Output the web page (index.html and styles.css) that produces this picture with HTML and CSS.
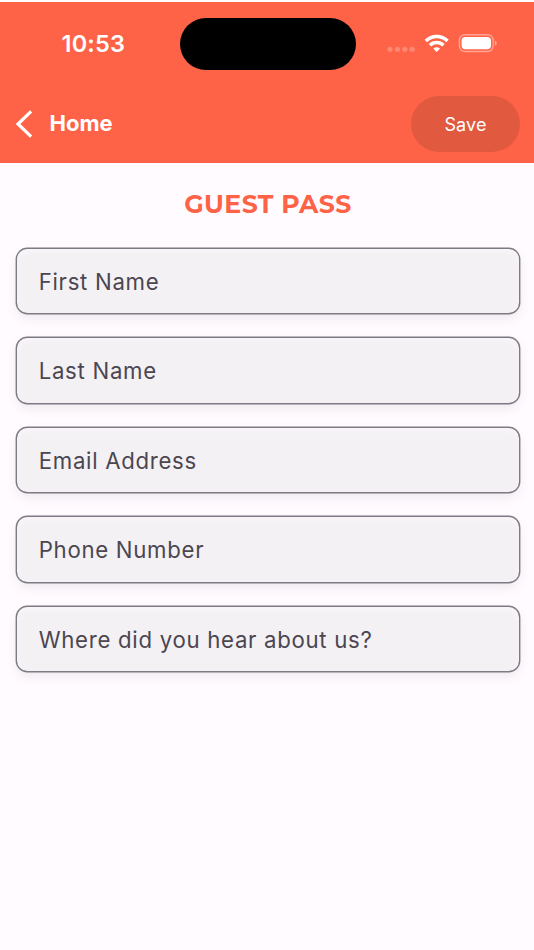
FILE: index.html
```html
<!DOCTYPE html>
<html lang="en">
<head>
<meta charset="utf-8">
<title>Guest Pass</title>
<link rel="stylesheet" href="styles.css">
</head>
<body>
<header class="header">
  <div class="status">
    <span class="time">10:53</span>
    <span class="island"></span>
    <svg class="indicators" width="112" height="24" viewBox="0 0 112 24">
      <g fill="#fff" fill-opacity=".24"><circle cx="3" cy="17.3" r="2.6"/><circle cx="10.4" cy="17.3" r="2.6"/><circle cx="17.8" cy="17.3" r="2.6"/><circle cx="25.2" cy="17.3" r="2.6"/></g>
      <g fill="none" stroke="#fff" stroke-width="3.5"><path d="M38.9 8.9a15.3 15.3 0 0 1 21.6 0"/><path d="M43 13.2a9.5 9.5 0 0 1 13.4 0"/></g>
      <path d="M46.3 16.6q3.4-2.9 6.8 0l-3.4 3.4z" fill="#fff"/>
      <rect x="72.4" y="2.7" width="33.8" height="16.8" rx="5.5" fill="none" stroke="#fff" stroke-opacity=".42" stroke-width="1.4"/>
      <rect x="74.6" y="4.9" width="29.4" height="12.4" rx="3.7" fill="#fff"/>
      <path d="M107.9 8.4q2 1 2 2.7t-2 2.7z" fill="#fff" fill-opacity=".45"/>
    </svg>
  </div>
  <nav class="nav">
    <svg class="back" width="18" height="28" viewBox="0 0 18 28"><path d="M16.1 1.3 3 14l13.1 12.7" fill="none" stroke="#fff" stroke-width="3.2"/></svg>
    <span class="home">Home</span>
    <button class="save">Save</button>
  </nav>
</header>
<main class="main">
  <h1 class="title">GUEST PASS</h1>
  <form class="form">
    <div class="field">First Name</div>
    <div class="field">Last Name</div>
    <div class="field">Email Address</div>
    <div class="field">Phone Number</div>
    <div class="field">Where did you hear about us?</div>
  </form>
</main>
</body>
</html>
```
FILE: styles.css
```css
* { box-sizing: border-box; }
body {
  margin: 0;
  height: 950px;
  overflow: hidden;
  background: #fffbff;
  font-family: Inter, "Liberation Sans", sans-serif;
}
.header {
  height: 163px;
  border-top: 2px solid #fffbff;
  background: #ff6347;
  color: #fff;
}
.status {
  display: grid;
  grid-template-columns: 180px 175.5px 1fr;
  height: 94px;
  padding-top: 16px;
}
.time {
  padding: 11px 0 0 61.5px;
  font-size: 23.5px;
  line-height: 30px;
  font-weight: 600;
  letter-spacing: .2px;
}
.island {
  height: 51.5px;
  border-radius: 26px;
  background: #000;
}
.indicators { margin: 14px 0 0 31.5px; }
.nav {
  display: flex;
  align-items: center;
  height: 56px;
  padding: 0 14px 0 15px;
}
.back { flex: none; }
.home {
  margin-left: 16.5px;
  margin-top: -2px;
  font-size: 22px;
  line-height: 30px;
  font-weight: 700;
}
.save {
  width: 109px;
  height: 56px;
  margin-left: auto;
  padding: 2px 0 0;
  border: 0;
  border-radius: 28px;
  background: #e1593f;
  color: #fff;
  font: 400 18px/24px Inter, "Liberation Sans", sans-serif;
  letter-spacing: .1px;
}
.main { padding: 24px 15px 0 17px; }
.title {
  margin: 0;
  text-align: center;
  color: #ff6347;
  font-family: Montserrat, Inter, "Liberation Sans", sans-serif;
  font-size: 25.2px;
  line-height: 35px;
  font-weight: 700;
  letter-spacing: .4px;
}
.form {
  display: grid;
  gap: 25.3px;
  margin-top: 27px;
}
.field {
  height: 64.2px;
  padding: 0 22px 0 21.7px;
  border-radius: 10.5px;
  background: #f4f1f4;
  box-shadow: 0 0 0 1.4px #7e7983, 0 5px 12px rgba(80, 70, 80, .1), inset 0 3px 6px rgba(255, 255, 255, .4);
  color: #4b4650;
  font-size: 22.2px;
  line-height: 65.4px;
  font-weight: 370;
  letter-spacing: .71px;
}
```
